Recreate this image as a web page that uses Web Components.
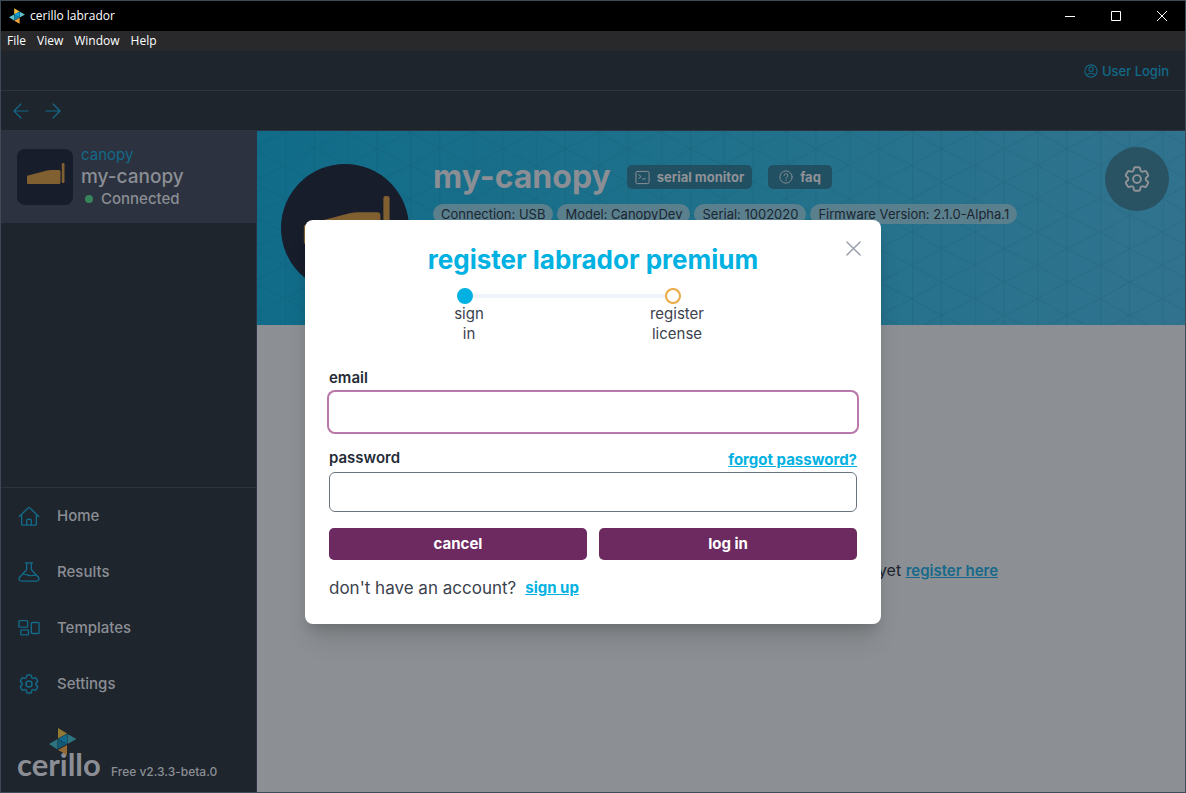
<!DOCTYPE html>
<html lang="en">
<head>
<meta charset="utf-8">
<title>cerillo labrador</title>
<style>
  body {
    margin: 0;
    font-family: Inter, "Liberation Sans", sans-serif;
    font-size: 15px;
    line-height: 20px;
    color: #8b8e94;
    --panel: #1e252d;
    --line: #2d3441;
    --teal: #136a89;
    --sky: #00b1e1;
    --plum: #6c2a60;
  }
</style>
</head>
<body>
<app-window>
  <window-titlebar slot="title" text="cerillo labrador"></window-titlebar>
  <window-menu slot="menu" items="File,View,Window,Help"></window-menu>
  <top-bar slot="top"></top-bar>
  <side-bar slot="side">
    <device-item slot="devices" kind="canopy" name="my-canopy" status="Connected"></device-item>
    <nav-item icon="home">Home</nav-item>
    <nav-item icon="flask">Results</nav-item>
    <nav-item icon="templates">Templates</nav-item>
    <nav-item icon="gear">Settings</nav-item>
  </side-bar>
  <device-header slot="main" name="my-canopy">
    <info-tag>Connection: USB</info-tag>
    <info-tag>Model: CanopyDev</info-tag>
    <info-tag>Serial: 1002020</info-tag>
    <info-tag>Firmware Version: 2.1.0-Alpha.1</info-tag>
  </device-header>
  <register-hint slot="main"></register-hint>
  <register-dialog slot="overlay" text="register labrador premium"></register-dialog>
</app-window>

<script>
const ICONS = {
  back: ["0 0 16 16", `<path d="M15 8H1M8 1 1 8l7 7"/>`],
  forward: ["0 0 16 16", `<path d="M1 8h14M8 1l7 7-7 7"/>`],
  user: ["0 0 16 16", `<circle cx="8" cy="8" r="7"/><circle cx="8" cy="6" r="2.5"/><path d="M4 12.5c1-2.6 7-2.6 8 0"/>`],
  terminal: ["0 0 16 16", `<rect x="1" y="1.500" width="14" height="13" rx="1.500"/><path d="m4 5 2.500 2L4 9M8 9.500h3"/>`],
  help: ["0 0 16 16", `<circle cx="8" cy="8" r="7"/><path d="M5.800 6.300a2.200 2.200 0 1 1 3 2.100c-.6.200-.8.500-.8 1.100M8 11.300v.7"/>`],
  close: ["0 0 16 16", `<path d="m1 1 14 14M15 1 1 15"/>`],
  home: ["0 0 24 24", `<path d="M1.500 12.500 11 3.300a1.500 1.500 0 0 1 2 0l9.500 9.200M4 10.500V21a1 1 0 0 0 1 1h14a1 1 0 0 0 1-1V10.500M9.500 22v-5a1.500 1.500 0 0 1 1.500-1.500h2a1.500 1.500 0 0 1 1.500 1.500v5"/>`],
  flask: ["0 0 24 24", `<path d="M8 2h8M9.500 2v6.500c0 .7-.3 1.300-.8 1.800L2 17.500C.3 19.500 1.500 22 4 22h16c2.500 0 3.700-2.500 2-4.500l-6.700-7.200c-.5-.5-.8-1.100-.8-1.800V2M5 14.500c4-1 5 1.500 8.500 1.500 2 0 3.500-.5 5-.5"/>`],
  templates: ["0 0 24 24", `<rect x="1" y="4" width="9.500" height="7" rx="1"/><rect x="3" y="14" width="8.500" height="5.500" rx="1"/><rect x="14.500" y="6" width="8.500" height="12" rx="1"/>`],
  gear: ["2 2 20 20", `<path d="M9.594 3.94c.09-.542.56-.94 1.11-.94h2.593c.55 0 1.02.398 1.11.94l.213 1.281c.063.374.313.686.645.87.074.04.147.083.22.127.325.196.72.257 1.075.124l1.217-.456a1.125 1.125 0 0 1 1.37.49l1.296 2.247a1.125 1.125 0 0 1-.26 1.431l-1.003.827c-.293.241-.438.613-.43.992a7.723 7.723 0 0 1 0 .255c-.008.378.137.75.43.991l1.004.827c.424.35.534.955.26 1.43l-1.298 2.247a1.125 1.125 0 0 1-1.369.491l-1.217-.456c-.355-.133-.75-.072-1.076.124a6.47 6.47 0 0 1-.22.128c-.331.183-.581.495-.644.869l-.213 1.281c-.09.543-.56.94-1.11.94h-2.594c-.55 0-1.019-.398-1.11-.94l-.213-1.281c-.062-.374-.312-.686-.644-.87a6.52 6.52 0 0 1-.22-.127c-.325-.196-.72-.257-1.076-.124l-1.217.456a1.125 1.125 0 0 1-1.369-.49l-1.297-2.247a1.125 1.125 0 0 1 .26-1.431l1.004-.827c.292-.24.437-.613.43-.991a6.932 6.932 0 0 1 0-.255c.007-.38-.138-.751-.43-.992l-1.004-.827a1.125 1.125 0 0 1-.26-1.43l1.297-2.247a1.125 1.125 0 0 1 1.37-.491l1.216.456c.356.133.751.072 1.076-.124.072-.044.146-.086.22-.128.332-.183.582-.495.644-.869l.214-1.28Z"/><circle cx="12" cy="12" r="3"/>`]
};

function icon(name, size, width = 1) {
  const [box, shapes] = ICONS[name];
  return `<svg width="${size}" height="${size}" viewBox="${box}" fill="none" stroke="currentColor" stroke-width="${width}" stroke-linecap="round" stroke-linejoin="round" aria-hidden="true">${shapes}</svg>`;
}

const canopyArt = `<svg class="art" viewBox="0 0 56 56" fill="#806030" aria-hidden="true">
  <path d="M11 26.500 30 21.600q2-.5 4-.5h8q1.500 0 1.500 1.500v11q0 1.500-1.500 1.500H11q-1 0-1-1V27.500q0-.8 1-1z"/>
  <rect x="44.800" y="14" width="2.700" height="20" rx="1"/>
</svg>`;

class AppWindow extends HTMLElement {
  constructor() {
    super();
    this.attachShadow({ mode: "open" });
    this.shadowRoot.innerHTML = `
      <style>
        :host {
          display: flex;
          flex-direction: column;
          min-height: 100vh;
          box-sizing: border-box;
          border: 1px solid #3f4a58;
          background: var(--panel);
        }
        .app {
          position: relative;
          flex: 1;
          display: flex;
          flex-direction: column;
        }
        .body {
          flex: 1;
          display: grid;
          grid-template-columns: 256px 1fr;
        }
        main {
          display: flex;
          flex-direction: column;
          background: #8c9094;
        }
      </style>
      <slot name="title"></slot>
      <slot name="menu"></slot>
      <div class="app">
        <slot name="top"></slot>
        <div class="body">
          <slot name="side"></slot>
          <main><slot name="main"></slot></main>
        </div>
        <slot name="overlay"></slot>
      </div>
    `;
  }
}

class WindowTitlebar extends HTMLElement {
  constructor() {
    super();
    this.attachShadow({ mode: "open" });
    this.shadowRoot.innerHTML = `
      <style>
        :host {
          display: flex;
          align-items: center;
          height: 30px;
          padding-left: 8px;
          background: #000;
          color: #fff;
          font: 12px/16px "Open Sans", sans-serif;
        }
        .text { flex: 1; margin-left: 5px; }
        button {
          width: 46px;
          height: 30px;
          padding: 0;
          border: none;
          background: transparent;
          color: inherit;
        }
        button:hover { background: #333; }
        svg { display: block; margin: auto; }
        .mark { margin: 0; }
      </style>
      <svg class="mark" width="16" height="16" viewBox="145 744 83 81" aria-hidden="true">
        <path fill="#f0b944" d="M172 744l28 17-28 16z"/>
        <path fill="#62c0cb" d="M201 762l27 15-27 15zM171 777v31l-26-17z"/>
        <path fill="#0fa3dc" d="M172 777l28-16v31z"/>
        <path fill="#1389b0" d="M172 777v31l28-16z"/>
        <path fill="#eda43f" d="M172 809l28-15v31z"/>
      </svg>
      <span class="text"></span>
      <button aria-label="Minimize"><svg width="10" height="10" stroke="#fff" fill="none"><path d="M0 5.500h10"/></svg></button>
      <button aria-label="Maximize"><svg width="10" height="10" stroke="#fff" fill="none"><path d="M.5.500h9v9h-9z"/></svg></button>
      <button aria-label="Close"><svg width="10" height="10" stroke="#fff" fill="none"><path d="m0 0 10 10M10 0 0 10"/></svg></button>
    `;
  }

  connectedCallback() {
    this.shadowRoot.querySelector(".text").textContent = this.getAttribute("text") || "";
  }
}

class WindowMenu extends HTMLElement {
  constructor() {
    super();
    this.attachShadow({ mode: "open" });
    this.shadowRoot.innerHTML = `
      <style>
        :host {
          display: flex;
          gap: 11px;
          padding: 0 6px;
          background: #29292c;
        }
        button {
          padding: 0;
          border: none;
          background: transparent;
          color: #fff;
          font: 12px/20px "Open Sans", sans-serif;
        }
      </style>
    `;
  }

  connectedCallback() {
    for (const name of (this.getAttribute("items") || "").split(",")) {
      const btn = document.createElement("button");
      btn.textContent = name;
      this.shadowRoot.append(btn);
    }
  }
}

class TopBar extends HTMLElement {
  constructor() {
    super();
    this.attachShadow({ mode: "open" });
    this.shadowRoot.innerHTML = `
      <style>
        :host { display: block; color: var(--teal); }
        .row {
          display: flex;
          align-items: center;
          height: 39px;
          padding: 0 16px 0 12px;
          border-bottom: 1px solid var(--line);
        }
        .account { justify-content: flex-end; }
        .history { gap: 16px; }
        a {
          display: flex;
          align-items: center;
          gap: 4px;
          color: inherit;
          font-size: 13px;
          font-weight: 500;
          text-decoration: none;
        }
        button {
          display: flex;
          padding: 0;
          border: none;
          background: transparent;
          color: inherit;
        }
      </style>
      <div class="row account"><a href="#login">${icon("user", 14, 1.2)}User Login</a></div>
      <div class="row history">
        <button aria-label="Back">${icon("back", 16, 1.2)}</button>
        <button aria-label="Forward">${icon("forward", 16, 1.2)}</button>
      </div>
    `;
  }
}

class SideBar extends HTMLElement {
  constructor() {
    super();
    this.attachShadow({ mode: "open" });
    this.shadowRoot.innerHTML = `
      <style>
        :host {
          display: flex;
          flex-direction: column;
          background: var(--panel);
          border-right: 1px solid var(--line);
        }
        .devices { flex: 1; }
        nav {
          border-top: 1px solid var(--line);
        }
        footer {
          display: flex;
          align-items: flex-end;
          gap: 6px;
          height: 68px;
          padding: 0 16px 12px;
          font-size: 12px;
          font-weight: 500;
        }
        .brand { display: block; overflow: visible; }
        .version { line-height: 16px; }
      </style>
      <div class="devices"><slot name="devices"></slot></div>
      <nav><slot></slot></nav>
      <footer>
        <svg class="brand" width="88" height="52" viewBox="0 0 88 52">
          <text x="0" y="48" font-family="Lato, sans-serif" font-size="31" font-weight="700" fill="#8b8e94">cerillo</text>
          <g>
            <path fill="#937a34" d="M41 0l9 5.500-9 5z"/>
            <path fill="#2d7480" d="M50.500 6l9 5-9 5zM40.500 11v10.500L32 16z"/>
            <path fill="#116a8c" d="M41 11l9-5v10z"/>
            <path fill="#125a73" d="M41 11.500V21l9-5z"/>
            <path fill="#936a35" d="M41 22l9-5v10z"/>
          </g>
        </svg>
        <span class="version">Free v2.3.3-beta.0</span>
      </footer>
    `;
  }
}

class DeviceItem extends HTMLElement {
  constructor() {
    super();
    this.attachShadow({ mode: "open" });
    this.shadowRoot.innerHTML = `
      <style>
        :host {
          display: flex;
          align-items: center;
          gap: 8px;
          padding: 14px 16px;
          background: #2c323f;
        }
        .tile {
          width: 56px;
          height: 56px;
          border-radius: 8px;
          background: #171d2a;
        }
        .art { display: block; }
        .kind { color: var(--teal); }
        .name { font-size: 19px; line-height: 24px; font-weight: 500; }
        .status {
          display: flex;
          align-items: center;
          gap: 8px;
          padding-left: 4px;
          font-weight: 500;
        }
        .status::before {
          content: "";
          width: 8px;
          height: 8px;
          border-radius: 50%;
          background: #36845a;
        }
      </style>
      <div class="tile">${canopyArt}</div>
      <div>
        <div class="kind"></div>
        <div class="name"></div>
        <div class="status"></div>
      </div>
    `;
  }

  connectedCallback() {
    for (const key of ["kind", "name", "status"]) {
      this.shadowRoot.querySelector("." + key).textContent = this.getAttribute(key) || "";
    }
  }
}

class NavItem extends HTMLElement {
  constructor() {
    super();
    this.attachShadow({ mode: "open" });
  }

  connectedCallback() {
    const name = this.getAttribute("icon");
    this.shadowRoot.innerHTML = `
      <style>
        :host { display: block; }
        a {
          display: flex;
          align-items: center;
          gap: 17px;
          height: 56px;
          padding-left: 17px;
          color: inherit;
          font-weight: 500;
          text-decoration: none;
        }
        .icon {
          display: flex;
          justify-content: center;
          width: 22px;
          color: var(--teal);
        }
      </style>
      <a href="#${name}"><span class="icon">${icon(name, name === "gear" ? 20 : 22, 1.5)}</span><slot></slot></a>
    `;
  }
}

class InfoTag extends HTMLElement {
  constructor() {
    super();
    this.attachShadow({ mode: "open" });
    this.shadowRoot.innerHTML = `
      <style>
        :host {
          display: block;
          padding: 0 8px;
          border-radius: 10px;
          background: #5a808e;
          color: #1c2530;
          font-size: 13px;
          line-height: 20px;
          white-space: nowrap;
        }
      </style>
      <slot></slot>
    `;
  }
}

class DeviceHeader extends HTMLElement {
  constructor() {
    super();
    this.attachShadow({ mode: "open" });
    this.shadowRoot.innerHTML = `
      <style>
        :host {
          display: grid;
          background: linear-gradient(90deg, #106c89, #20718b 50%, #31738f);
        }
        .pattern, .content { grid-area: 1 / 1; }
        .pattern { width: 100%; height: 100%; }
        .content {
          display: flex;
          align-items: flex-start;
          gap: 24px;
          padding: 16px 16px 33px 24px;
          position: relative;
        }
        .avatar {
          flex: none;
          width: 128px;
          height: 128px;
          margin-top: 17px;
          border-radius: 50%;
          background: #171d2a;
        }
        .info { flex: 1; margin-top: 10px; }
        .row { display: flex; align-items: center; gap: 16px; }
        .tags { display: flex; gap: 4px; margin-top: 7px; }
        h1 {
          margin: 0;
          font-size: 32px;
          line-height: 40px;
          font-weight: 700;
        }
        button { border: none; color: #8f9297; font: inherit; }
        .small {
          display: flex;
          align-items: center;
          gap: 7px;
          height: 24px;
          padding: 0 8px;
          border-radius: 5px;
          background: #215062;
          font-size: 13px;
          font-weight: 700;
        }
        .faq { padding: 0 11px; }
        .round {
          display: flex;
          align-items: center;
          justify-content: center;
          width: 64px;
          height: 64px;
          padding: 0;
          border-radius: 50%;
          background: #295262;
        }
      </style>
      <svg class="pattern" aria-hidden="true">
        <defs>
          <pattern id="tri" width="188" height="100" patternUnits="userSpaceOnUse" patternTransform="translate(28 1) scale(.3335)">
            <path d="M2 0v100M88 0v100M0 0l88 50L0 100M188 0 88 50l100 50" fill="none" stroke="#0b4660" stroke-opacity=".18" stroke-width="3"/>
          </pattern>
        </defs>
        <rect width="100%" height="100%" fill="url(#tri)"/>
      </svg>
      <div class="content">
        <div class="avatar">${canopyArt}</div>
        <div class="info">
          <div class="row">
            <h1></h1>
            <button class="small">${icon("terminal", 15, 1)}serial monitor</button>
            <button class="small faq">${icon("help", 14, 1)}faq</button>
          </div>
          <div class="tags"><slot></slot></div>
        </div>
        <button class="round" aria-label="Device settings">${icon("gear", 26, 1.5)}</button>
      </div>
    `;
  }

  connectedCallback() {
    this.shadowRoot.querySelector("h1").textContent = this.getAttribute("name") || "";
  }
}

class RegisterHint extends HTMLElement {
  constructor() {
    super();
    this.attachShadow({ mode: "open" });
    this.shadowRoot.innerHTML = `
      <style>
        :host {
          flex: 1;
          display: flex;
          align-items: center;
          justify-content: center;
        }
        p {
          width: 554px;
          margin: 0;
          padding-top: 24px;
          color: #1e2530;
          font-size: 16px;
          line-height: 24px;
          text-align: right;
        }
        a { color: #17698b; font-size: 15px; font-weight: 600; }
      </style>
      <p>yet <a href="#register">register here</a></p>
    `;
  }
}

class StepTrack extends HTMLElement {
  constructor() {
    super();
    this.attachShadow({ mode: "open" });
    this.shadowRoot.innerHTML = `
      <style>
        :host { display: block; color: #3b424d; }
        .track {
          display: flex;
          align-items: center;
          padding: 0 24px 0 16px;
        }
        .dot {
          box-sizing: border-box;
          width: 16px;
          height: 16px;
          border: 2px solid #e9a944;
          border-radius: 50%;
        }
        .dot.on { border-color: var(--sky); background: var(--sky); }
        .bar { flex: 1; height: 4px; background: #f0f3f9; }
        .labels { display: flex; justify-content: space-between; }
        .labels div { display: flex; justify-content: center; width: 56px; }
        .labels span { width: min-content; text-align: center; }
      </style>
      <div class="track"><i class="dot on"></i><i class="bar"></i><i class="dot"></i></div>
      <div class="labels"><div><span>sign in</span></div><div><span>register license</span></div></div>
    `;
  }
}

class RegisterDialog extends HTMLElement {
  constructor() {
    super();
    this.attachShadow({ mode: "open" });
    this.shadowRoot.innerHTML = `
      <style>
        :host {
          position: absolute;
          inset: 0;
          display: flex;
          align-items: center;
          justify-content: center;
          padding-top: 1px;
        }
        :host([hidden]) { display: none; }
        section {
          position: relative;
          box-sizing: border-box;
          width: 100%;
          max-width: 576px;
          padding: 24px;
          border-radius: 8px;
          background: #fff;
          color: #242b36;
          box-shadow: 0 20px 25px -5px rgba(0, 0, 0, 0.12), 0 8px 12px -4px rgba(0, 0, 0, 0.14);
        }
        h2 {
          margin: 0 0 12px;
          color: var(--sky);
          font-size: 26px;
          line-height: 32px;
          font-weight: 700;
          text-align: center;
        }
        step-track { margin: 0 152px 24px 112px; }
        .close {
          position: absolute;
          top: 16px;
          right: 16px;
          display: flex;
          align-items: center;
          justify-content: center;
          width: 24px;
          height: 24px;
          padding: 0;
          border: none;
          background: transparent;
          color: #989dab;
        }
        .head {
          display: flex;
          align-items: center;
          justify-content: space-between;
          margin-bottom: 4px;
        }
        label { font-weight: 600; }
        input {
          display: block;
          box-sizing: border-box;
          width: 100%;
          height: 40px;
          margin-bottom: 16px;
          padding: 0 12px;
          border: 1px solid #6b7280;
          border-radius: 6px;
          background: #fff;
          font: inherit;
          outline: none;
        }
        input.active {
          border-color: #fff;
          box-shadow: 0 0 0 2px #b978ab;
        }
        a { color: var(--sky); font-weight: 700; }
        .forgot { padding-top: 4px; line-height: 16px; }
        .actions { display: flex; gap: 12px; margin-bottom: 16px; }
        .actions button {
          flex: 1;
          height: 32px;
          border: none;
          border-radius: 5px;
          background: var(--plum);
          color: #fff;
          font: inherit;
          font-weight: 700;
        }
        p {
          display: flex;
          align-items: center;
          gap: 9px;
          margin: 0;
          color: #3b424d;
          font-size: 17px;
          line-height: 24px;
        }
        p a { font-size: 15px; }
      </style>
      <section role="dialog" aria-labelledby="heading">
        <h2 id="heading"></h2>
        <button class="close" aria-label="Close">${icon("close", 15, 1.5)}</button>
        <step-track></step-track>
        <form>
          <div class="head"><label for="email">email</label></div>
          <input id="email" class="active" type="email">
          <div class="head"><label for="password">password</label><a class="forgot" href="#forgot">forgot password?</a></div>
          <input id="password" type="password">
          <div class="actions">
            <button type="button" id="cancel">cancel</button>
            <button type="submit">log in</button>
          </div>
        </form>
        <p>don't have an account? <a href="#signup">sign up</a></p>
      </section>
    `;
  }

  connectedCallback() {
    const root = this.shadowRoot;
    root.getElementById("heading").textContent = this.getAttribute("text") || "";
    root.querySelector(".close").addEventListener("click", () => this.close());
    root.getElementById("cancel").addEventListener("click", () => this.close());
    root.querySelector("form").addEventListener("submit", (e) => e.preventDefault());
    root.querySelectorAll("input").forEach((input) => {
      input.addEventListener("focus", () => {
        root.querySelectorAll("input").forEach((el) => el.classList.toggle("active", el === input));
      });
    });
  }

  close() {
    this.hidden = true;
    this.dispatchEvent(new CustomEvent("close"));
  }
}

customElements.define("app-window", AppWindow);
customElements.define("window-titlebar", WindowTitlebar);
customElements.define("window-menu", WindowMenu);
customElements.define("top-bar", TopBar);
customElements.define("side-bar", SideBar);
customElements.define("device-item", DeviceItem);
customElements.define("nav-item", NavItem);
customElements.define("info-tag", InfoTag);
customElements.define("device-header", DeviceHeader);
customElements.define("register-hint", RegisterHint);
customElements.define("step-track", StepTrack);
customElements.define("register-dialog", RegisterDialog);
</script>
</body>
</html>
